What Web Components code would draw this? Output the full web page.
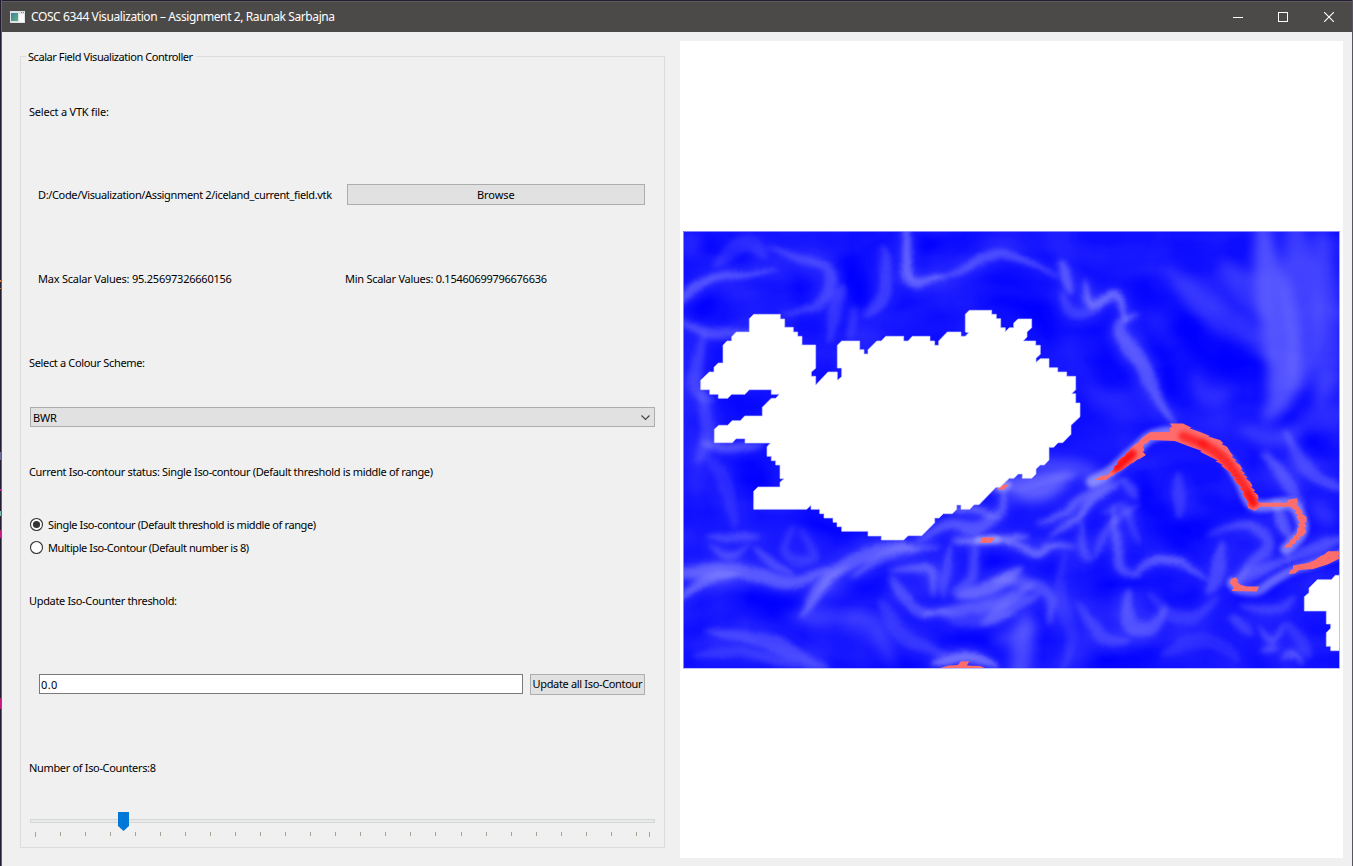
<!DOCTYPE html>
<html lang="en"><head><meta charset="utf-8"><title>COSC 6344 Visualization</title>
<style>html,body{margin:0;width:1353px;height:866px;overflow:hidden;background:#241c31;font:11px/14px "Noto Sans","Open Sans",sans-serif;color:#000}</style></head>
<body><viz-window></viz-window>
<script>
const define=(name,html,ready)=>customElements.define(name,class extends HTMLElement{
 connectedCallback(){if(this.shadowRoot)return;const r=this.attachShadow({mode:'open'});r.innerHTML=html;if(ready)ready.call(this,r)}
});

/* Label whose tracking is adjusted to fill a given width */
define('ui-text','<style>:host{display:inline-block;white-space:pre;text-align:left}span{display:inline-block;white-space:pre}</style><span></span>',function(r){
 const s=r.querySelector('span'),t=this.getAttribute('value'),w=+this.getAttribute('fit');s.textContent=t;
 const n=s.getBoundingClientRect().width;
 if(w&&n){s.style.letterSpacing=((w-.3-n)/t.length)+'px';this.style.width=w+'px'}
});
define('ui-button','<style>:host{display:flex;box-sizing:border-box;align-items:center;justify-content:center;background:#e1e1e1;border:1px solid #adadad;height:21px}</style><slot></slot>');
define('ui-radio',`<style>:host{display:flex;align-items:center;height:23px;gap:5px}svg{display:block;margin-top:-1px}.dot{display:none}:host([checked]) .dot{display:block}</style>
<svg width="14" height="14" viewBox="0 0 14 14"><circle cx="7.5" cy="7.5" r="6" fill="#fff" stroke="#333" stroke-width="1.1"/><circle class="dot" cx="7.5" cy="7.5" r="3.6" fill="#333"/></svg><slot></slot>`);
define('ui-combo',`<style>:host{display:flex;box-sizing:border-box;align-items:center;justify-content:space-between;width:625px;height:20px;border:1px solid #adadad;background:#e1e1e1;padding:1px 3px 0 2px}</style>
<slot></slot><svg width="11" height="8" viewBox="0 0 11 8" fill="none" stroke="#444" stroke-width="1.1"><path d="M1.5 1.5 5.5 5.5 9.5 1.5"/></svg>`);
define('ui-input','<style>:host{display:flex;box-sizing:border-box;align-items:center;width:484px;height:20px;border:1px solid #7a7a7a;background:#fff;padding:2px 1px 0}</style><slot></slot>');
define('ui-slider','<style>:host{display:block;width:625px;height:28px}svg{display:block}</style><svg width="625" height="28" shape-rendering="crispEdges"></svg>',r=>{
 let s='<rect x=".5" y="7.5" width="624" height="3" fill="#e7eaea" stroke="#d6d6d6"/>';
 for(let i=0;i<25;i++){const x=Math.floor(5+i*25.06);s+=`<rect x="${x}" y="20" width="1" height="${i?4:5}" fill="#a6a497"/>`}
 s+='<rect x="619" y="20" width="1" height="5" fill="#a6a497"/><path d="M88 0h11v14l-5.5 5-5.5-5z" fill="#0078d7" shape-rendering="auto"/>';
 r.querySelector('svg').innerHTML=s;
});
define('title-bar',`<style>:host{display:flex;box-sizing:border-box;height:31px;background:#4c4a48;border-top:1px solid #5d5b5a;color:#fff;align-items:center;font-size:12px;line-height:16px;padding-left:8px}
.icon{display:block;margin-right:6px}.grow{flex:1}.btn{width:46px;display:flex;justify-content:center}.btn svg{display:block;margin-top:-1px}.min{width:45px}</style>
<svg class="icon" width="15" height="12"><defs><linearGradient id="g" x2="1" y2="1"><stop stop-color="#3f7fa6"/><stop offset="1" stop-color="#5fb579"/></linearGradient></defs><rect width="15" height="12" fill="#dfe3e6"/><rect x="1" y="2" width="7" height="8" fill="url(#g)"/><rect x="9" y="3" width="5" height="8" fill="#fafafa"/><rect x="11" y="1" width="1" height="1" fill="#879"/><rect x="13" y="1" width="1" height="1" fill="#879"/></svg>
<ui-text value="COSC 6344 Visualization – Assignment 2, Raunak Sarbajna" fit="304"></ui-text><span class="grow"></span>
<span class="btn min"><svg width="10" height="10"><path d="M0 5.5h10" stroke="#fff"/></svg></span>
<span class="btn"><svg width="10" height="10"><rect x=".5" y=".5" width="9" height="9" fill="none" stroke="#fff"/></svg></span>
<span class="btn"><svg width="10" height="10"><path d="M0 0 10 10M10 0 0 10" stroke="#fff" stroke-width="1.1"/></svg></span>`);

define('control-panel',`<style>:host{display:block;width:645px;height:792px;box-sizing:border-box;border:1px solid #dcdcdc}
.title{position:absolute;margin:-7px 0 0 5px;background:#f0f0f0;padding:0 3px 0 2px;height:14px}
.rows{display:grid;grid-template-rows:110px 56px 112px 56px 52px 58px 70px 60px 106px 62px 47px;padding:0 9px 0 8px}
.row{display:flex;align-items:center}.in{padding-left:9px}.c{padding-left:1px}
.b1{width:298px;margin:-1px 0 0 15px}.b2{width:115px;margin-left:7px}.min{margin-left:113px}.f{padding-left:10px}
.radios{display:flex;flex-direction:column;justify-content:center}.s{align-items:start;padding:13px 0 0 1px}</style>
<div class="title"><ui-text value="Scalar Field Visualization Controller" fit="165"></ui-text></div>
<div class="rows">
<div class="row"><ui-text value="Select a VTK file:" fit="80"></ui-text></div>
<div class="row in"><ui-text value="D:/Code/Visualization/Assignment 2/iceland_current_field.vtk" fit="294"></ui-text><ui-button class="b1"><ui-text value="Browse" fit="38"></ui-text></ui-button></div>
<div class="row in"><ui-text value="Max Scalar Values: 95.25697326660156" fit="194"></ui-text><ui-text class="min" value="Min Scalar Values: 0.15460699796676636" fit="202"></ui-text></div>
<div class="row"><ui-text value="Select a Colour Scheme:" fit="116"></ui-text></div>
<div class="row c"><ui-combo><ui-text value="BWR" fit="24"></ui-text></ui-combo></div>
<div class="row"><ui-text value="Current Iso-contour status: Single Iso-contour (Default threshold is middle of range)" fit="404"></ui-text></div>
<div class="radios"><ui-radio checked><ui-text value="Single Iso-contour (Default threshold is middle of range)" fit="268"></ui-text></ui-radio><ui-radio><ui-text value="Multiple Iso-Contour (Default number is 8)" fit="201"></ui-text></ui-radio></div>
<div class="row"><ui-text value="Update Iso-Counter threshold:" fit="148"></ui-text></div>
<div class="row f"><ui-input><ui-text value="0.0" fit="17"></ui-text></ui-input><ui-button class="b2"><ui-text value="Update all Iso-Contour" fit="110"></ui-text></ui-button></div>
<div class="row"><ui-text value="Number of Iso-Counters:8" fit="127"></ui-text></div>
<div class="row s"><ui-slider></ui-slider></div></div>`);

const LAND='749.3,318.7 753.7,314.3 780.3,314.3 780.3,319 784.7,319 784.7,327.3 793.3,327.3 793.3,332 797.7,332 797.7,336.3 802,336.3 802,345 815.7,345 815.7,368.3 811.3,372 811.3,376.3 815.7,376.3 815.7,385 828,372 837.3,372 837.3,380.3 841.7,376.7 841.7,368 837.3,368 837.3,345.3 841.7,341 859.7,341 859.7,349.7 864,349.7 864,354 868,354 868,349.7 876.7,341 881.3,341 885.7,336.3 903.7,336.3 903.7,341 908,341 912.3,336.3 930,336.3 930,341 934.7,341 934.7,345.3 938.7,345.3 938.7,341 947.3,332 961,332 961,336.3 965.3,336.3 968.7,332.7 965.3,332 965.3,314.3 969.3,310.3 991.7,310.3 991.7,314.3 996.3,314.3 996.3,318.7 1000.7,318.7 1000.7,327.7 1005.3,327.7 1005.3,331.7 1009.3,327.7 1013.7,327.7 1013.7,323 1018,319 1031.7,319 1031.7,327.7 1027,332 1027,337 1023.3,341 1035.7,341 1035.7,345.3 1040.3,345.3 1040.3,354.3 1036,358.3 1036,362.3 1040.3,358.7 1049,358.7 1049,367.7 1057.7,367.7 1057.7,372 1066.7,372 1066.7,376.3 1075.7,376.3 1075.7,389.7 1071.7,393.7 1075.7,393.7 1075.7,403 1080,403 1080,416.7 1071,425.3 1071,434.3 1062.7,442.7 1058,442.7 1053.7,447.3 1049,447.3 1049,460 1044.3,465 1040.3,465 1036,469 1036,474 1031.7,478.3 1022.3,478.3 1022.3,474 1018.3,474 1014,478.3 1009.3,478.3 1000,487.3 996,487.3 979,504.7 974,504.7 969.7,509.3 961,509.3 961,505 956.7,505 956.7,509.3 952.3,513.7 943.3,513.7 939,518 934.7,518 934.7,522.7 921.7,535.7 908,535.7 903.7,540 881.3,540 881.3,536 868,536 868,531.3 841.7,531.3 841.7,526.7 837,526.7 837,522.3 833,522.3 833,518 824,518 824,513.7 819.7,513.7 819.7,509.3 811,509.3 811,505.3 806.7,509.3 753.7,509.3 753.7,491.3 758,487 780,487 780,482.3 784,478.7 780,478.7 780,465 775.7,465 775.7,460.7 771.3,460.7 771.3,456.3 767,456.3 767,446.7 770.3,443 745,443 745,438.7 736,438.7 732.3,442.7 714.3,442.7 714.3,429.3 718.7,425.3 727.7,425.3 732,420.7 740.3,420.7 744.7,416 762.3,416 762.3,407.3 771.3,398.3 775.7,398.3 779.3,394.3 771.3,394.3 771.3,389.7 749.3,389.7 745,394.3 731.7,394.3 727.7,398.3 718.3,398.3 718.3,394.3 709.7,394.3 709.7,389.7 700.7,389.7 700.7,380.3 709.3,372 714,372 714,367.3 718.3,363 723,363 723,345.3 727,341 731.7,341 731.7,336.7 736.3,332 749.3,332';
const LAND2='1341,575.3 1335.3,575.3 1331.3,579.7 1317.3,579.7 1309,588 1309,592.7 1304.3,596.7 1304.3,611 1326.3,611 1326.3,624 1330.7,624 1330.7,628.3 1326.3,632.7 1326.3,646.3 1330.7,646.3 1330.7,650.7 1341,650.7';
/* strong currents, above the middle of the colour range */
const RED=[
'1094.7,480 1100,476.5 1108,475 1118,461 1130,449 1141.7,438.3 1150,432.3 1170,431.7 1170,423.5 1183,423.5 1200,432 1220,440 1227,446.7 1230,451.7 1240,465 1250,481.7 1258,495 1259,502.7 1286.7,502.7 1289,499.5 1297,498.3 1299.5,508 1306.5,517 1306.5,532 1291,547.5 1284,547.5 1297,531.7 1298.3,520 1292.3,508.3 1290,506.8 1260,506.8 1255,510.7 1248.3,508.3 1245,498.3 1236.7,483.3 1226.7,470 1210,456.7 1190,446.7 1175,441 1150,440 1143,447 1146,455 1126.7,466.7 1106,480',
'980,542.7 982,537.5 995,537.5 991,542.7','996.7,489.5 1003,485 1009,484.5 1004,489.5','940,668 949,665.5 958,665 961,661.3 969,661.3 967,665.5 980,666 985,668',
'1231.5,591 1234,587.5 1230,583 1231,579 1236,577.3 1241,585 1247,586.5 1259,586.5 1256.7,591.5','1288.5,574 1293,565.5 1308,563 1315,560 1328,551.2 1340,551.2 1340,558.2 1328,564.3 1313,569 1299,570 1295,573.5'];
/* smooth weak currents: points, width, strength */
const FLOW=[
['676,305 683,298 700,285 723,277 780,270',8,.5],['713,268 747,242 767,258',14,.2],['767,245 797,258 827,268 827,292 813,308 780,314',10,.33],['676,318 710,333 760,330',8,.42],['683,235 700,250',16,.18],
['882,245 885,292 864,318',13,.3],['843,285 837,302 828,345',12,.25],['857,305 850,340',8,.22],['908,205 906,260 914,283 945,275',9,.6],['930,282 967,268 987,257 1013,255 1060,278',9,.42],['1060,258 1072,295',10,.5],['1086,278 1092,304 1117,296 1127,325',7,.7],['1060,290 1072,312 1100,310',11,.28],['1138,312 1120,330 1143,365 1153,392 1177,428',13,.5],
['1260,205 1267,262 1273,292 1283,348 1280,398 1262,422',30,.5],['1293,208 1300,270 1305,340 1294,395',30,.34],['1320,220 1327,315 1327,375 1317,410',22,.3],['1165,265 1190,292 1213,312 1253,335 1275,365',22,.24],['1220,260 1270,320',20,.22],['1237,425 1270,438 1303,430',15,.33],['1195,370 1205,395 1235,390',16,.2],['1290,425 1350,410',20,.18],
['1284,430 1300,460 1320,480 1350,490',12,.36],['1262,450 1280,472 1293,490 1302,510',12,.42],['1275,500 1282,520 1292,540',11,.5],['990,493 1020,483 1077,473',12,.4],['1010,493 1042,491 1070,478',15,.6],['1025,466 1073,468 1110,485',16,.4],['1035,525 1062,515 1083,497 1127,478',7,.5],['1050,536 1077,518 1092,500 1120,485',7,.6],['1080,520 1082,552 1090,564',8,.35],['1090,562 1110,527 1140,504',8,.3],['1112,505 1117,533 1120,568 1140,573',8,.45],['1133,575 1153,560 1180,563 1207,580',8,.52],['1100,513 1125,508 1138,545',8,.28],['1122,478 1138,500',8,.35],['1180,470 1180,520',11,.26],['1206,595 1218,570 1222,540',13,.38],['1205,536 1240,525 1260,530 1267,547 1247,567 1232,590',10,.38],['1150,590 1170,615 1195,617 1220,595',12,.22],['1128,587 1127,607 1133,627 1153,627 1167,605',14,.4],['1075,600 1103,637 1130,642',10,.28],['1225,583 1255,573 1293,555',11,.4],['1310,500 1335,525',15,.24],['1285,560 1345,537',11,.4],
['990,538 1020,547 1037,553 1050,545 1075,547',8,.6],['950,541 985,541 1030,536',7,.65],['945,510 970,509 1000,517',6,.55],['915,543 947,525 975,528 1000,510 1008,480',11,.45],
['640,575 700,571 747,572 790,583 830,568',13,.52],['670,606 700,583 740,575',9,.55],['800,620 820,587 853,560 887,548 920,550',13,.5],['807,613 830,580 848,565',6,.42],['850,580 887,555 940,545',9,.4],['780,615 813,617 867,620 880,637 895,670',16,.3],['887,571 920,568 933,573 934,598',8,.5],['890,575 913,607 935,615',12,.42],['920,615 960,610 1000,603 1035,583',11,.46],['955,597 993,587 1023,567',13,.58],['950,543 943,600',9,.32],['973,540 972,577 950,595',9,.36],['933,608 970,622 1020,612',11,.22],['703,632 763,640 797,657 830,670',14,.36],['690,655 740,652 800,668',10,.22],['705,537 760,538',8,.34],['708,546 730,556 750,545',7,.34],['752,547 773,564 795,575',7,.42],['795,525 785,550 800,562 813,555 800,528',9,.24],['705,455 725,485 735,530',14,.18],['692,440 697,495',18,.16],['700,390 708,430 697,465',12,.28],['700,442 725,448 765,444',8,.45],['705,330 695,385 715,402',12,.28],
['990,580 1027,583 1050,597 1050,627',11,.38],['980,625 1005,610 1040,595',12,.4],['990,645 1040,624',15,.28],['1018,685 1027,610',18,.42],['930,664 963,656 1000,668',10,.7],['880,600 902,635 950,655',13,.24],['1065,550 1060,590 1072,640 1060,675',11,.16],['1258,625 1272,640 1290,622',5,.42],['1260,650 1280,646',6,.4],['1280,660 1292,653 1304,665',6,.48],['1230,615 1253,636',9,.28],['1290,622 1310,660',10,.22],['1160,655 1205,640 1240,660',14,.16],['1295,595 1275,610 1240,605',9,.28]];
const DARK=[['710,245 740,258',10],['760,285 780,290 800,285',15],['700,310 710,300',10],['845,260 862,300',16],['930,245 960,242 980,252',12],['975,285 1020,295 1060,330',24],['1090,340 1115,380',25],['1150,285 1170,305 1210,350 1260,375',22],['1155,345 1165,390',18],['720,400 755,403',10],['700,610 760,600 790,610',17],['690,630 730,622',10],['835,620 860,590 890,580',10],['1140,480 1155,510 1200,530',18],['1165,530 1180,545',10],['1210,500 1245,517',9],['1155,600 1175,602 1190,600',14],['1100,590 1130,588',10],['1060,650 1075,620',10],['1310,440 1340,455',10],['870,655 920,660 970,638 1000,645',12],['1090,660 1150,655',13],['760,520 800,520 850,545',8],['745,470 760,480',16],['730,545 770,560',5],['990,560 1060,570',9],['1225,530 1250,545',7],['1275,415 1300,418',7],['900,590 920,620',6]];
const parse=p=>p.split(' ').map(q=>q.split(',').map(Number));
/* Catmull-Rom samples through the points */
function samples(p){const a=parse(p),o=[],n=8;
 for(let i=0;i<a.length-1;i++){const z=a[i-1]||a[i],b=a[i],c=a[i+1],e=a[i+2]||c;
  for(let k=0;k<n+(i===a.length-2);k++){const t=k/n,f=j=>.5*(2*b[j]+(c[j]-z[j])*t+(2*z[j]-5*b[j]+4*c[j]-e[j])*t*t+(3*b[j]-z[j]-3*c[j]+e[j])*t*t*t);o.push([f(0),f(1)])}}
 return o}
const curve=p=>'M'+samples(p).map(q=>q[0].toFixed(1)+' '+q[1].toFixed(1)).join('L');
/* ribbon that thins out at both ends */
function ribbon(p,w){const a=samples(p),l=[],r=[],N=a.length-1;a.forEach((q,i)=>{const b=a[Math.max(0,i-1)],c=a[Math.min(N,i+1)],dx=c[0]-b[0],dy=c[1]-b[1],m=Math.hypot(dx,dy)||1,h=w/2*Math.pow(Math.sin(Math.PI*i/N),.7);
  l.push([(q[0]-dy/m*h).toFixed(1),(q[1]+dx/m*h).toFixed(1)]);r.unshift([(q[0]+dy/m*h).toFixed(1),(q[1]-dx/m*h).toFixed(1)])});return l.concat(r).join(' ')}
/* edges of the thresholded cells are notched once for each grid row */
function notch(p){const a=parse(p),o=[];a.forEach((b,i)=>{const c=a[(i+1)%a.length],dy=c[1]-b[1],n=Math.max(1,Math.round(Math.abs(dy)/4.4));
 for(let k=0;k<n;k++){const x=b[0]+(c[0]-b[0])*k/n,y=b[1]+dy*k/n;o.push([x,y]);if(n>1&&k)o.push([x+(dy>0?-2.2:2.2),y+(dy>0?.6:-.6)])}});return o.join(' ')}
define('field-view','<style>:host{display:flex;box-sizing:border-box;width:663px;height:817px;background:#fff;padding:190px 3px 0}svg{display:block}</style><svg width="657" height="438" viewBox="683 231 657 438"></svg>',r=>{
 const halo='1092,482 1110,472 1135,450 1152,436 1177,433 1205,443 1225,457 1240,480 1254,505 1290,504 1302,522 1300,535 1286,549';
 const box='filterUnits="userSpaceOnUse" x="640" y="190" width="740" height="520" color-interpolation-filters="sRGB"';
 const blur=(id,n)=>`<filter id="${id}" ${box}><feGaussianBlur stdDeviation="${n}"/></filter>`;
 const noise=(id,f,seed,k,o)=>`<filter id="${id}" ${box}><feTurbulence type="fractalNoise" baseFrequency="${f}" numOctaves="2" seed="${seed}"/><feColorMatrix values="0 0 0 0 .55 0 0 0 0 .55 0 0 0 0 1 ${k} 0 0 0 ${o}"/></filter>`;
 let s='<defs>'+blur('b',2.4)+blur('d',6)+blur('h',2)+
  `<filter id="w" ${box}><feTurbulence type="fractalNoise" baseFrequency=".03" numOctaves="2" seed="4" result="n"/><feGaussianBlur in="SourceGraphic" stdDeviation="2.8"/><feDisplacementMap in2="n" scale="7" xChannelSelector="R" yChannelSelector="G"/></filter>`+
  noise('t1','.012 .03',7,1.1,-.47)+noise('t2','.02 .012',3,.7,-.3)+
  '<clipPath id="rc">'+RED.map(p=>`<polygon points="${notch(p)}"/>`).join('')+'</clipPath><clipPath id="f"><rect x="683" y="231" width="656.5" height="437"/></clipPath></defs><g clip-path="url(#f)"><rect x="683" y="231" width="657" height="438" fill="#0e0eff"/><g fill="none" stroke-linecap="round" stroke-linejoin="round">';
 s+='<g filter="url(#d)" stroke="#0000ff">'+DARK.map(q=>`<path d="${curve(q[0])}" stroke-width="${q[1]+6}"/>`).join('')+'</g></g>';
 s+='<rect x="683" y="231" width="657" height="438" filter="url(#t2)" opacity=".45"/><rect x="683" y="500" width="657" height="170" filter="url(#t1)" opacity=".3"/>';
 s+='<g filter="url(#d)" fill="#8585ff">'+FLOW.map(q=>`<polygon points="${ribbon(q[0],q[1]>14?q[1]*1.2:q[1]*2.1)}" opacity="${q[1]>14?q[2]*1.1:q[2]*.42}"/>`).join('')+'</g>';
 s+='<g filter="url(#w)" fill="#9898ff">'+FLOW.filter(q=>q[1]<=14).map(q=>`<polygon points="${ribbon(q[0],q[1]*1.15)}" opacity="${q[2]*.85}"/>`).join('')+'</g>';
 s+=`<g filter="url(#h)" fill="none" stroke-linecap="round" stroke="#c8c8ff"><path d="${curve(halo)}" stroke-width="12" opacity=".55"/><path d="${curve('1232,582 1237,589 1257,591 1273,581 1291,571 1312,564 1340,554')}" stroke-width="9" opacity=".45"/><path d="M978 540H997M1000 488l8-3" stroke-width="7" opacity=".5"/></g>`;
 s+=`<g fill="#ff6c6c">${RED.map(p=>`<polygon points="${notch(p)}"/>`).join('')}</g><g clip-path="url(#rc)"><g filter="url(#h)" fill="none" stroke="#ff1010" stroke-linecap="round"><path d="M1116 468 1132 454" stroke-width="9"/><path d="M1183 436 1203 444" stroke-width="9" opacity=".7"/><path d="${curve('1203,444 1222,457 1235,473 1245,488 1253,503')}" stroke-width="10" opacity=".72"/><path d="M1248 494 1254 503" stroke-width="7"/></g></g>`;
 s+=`<g fill="#fff" stroke="#c9c9ff" stroke-width=".7"><polygon points="${LAND}"/><polygon points="${LAND2}"/></g></g><path d="M683.5 668V231.5H1339.5V575M1339.5 651V668.5H683" fill="none" stroke="#a9a9ff" opacity=".75"/>`;
 r.querySelector('svg').innerHTML=s;
});
define('viz-window',`<style>:host{display:grid;grid-template-columns:2px 1350px 1px;height:866px}
.edge{background:linear-gradient(#e67e32,#e67e32) 0 280px/1px 2px no-repeat,linear-gradient(#b3762b,#b3762b) 0 288px/1px 1px no-repeat,linear-gradient(#686d9d,#686d9d) 0 452px/1px 8px no-repeat,linear-gradient(#c92892,#c92892) 0 489px/1px 2px no-repeat,linear-gradient(#73bbb2,#73bbb2) 0 511px/1px 5px no-repeat,linear-gradient(#bd197e,#bd197e) 0 530px/1px 8px no-repeat,linear-gradient(#bd197e,#bd197e) 0 698px/1px 11px no-repeat,#241c31;border-right:1px solid #656269;box-sizing:border-box}
.right{background:#575560}.win{background:#f0f0f0;border-top:1px solid #241c31;box-sizing:border-box;height:866px}
.body{display:flex;align-items:flex-start;padding:9px 0 0 18px}control-panel{margin-top:15px;margin-right:15px}</style>
<div class="edge"></div><div class="win"><title-bar></title-bar><div class="body"><control-panel></control-panel><field-view></field-view></div></div><div class="right"></div>`);
</script></body></html>
